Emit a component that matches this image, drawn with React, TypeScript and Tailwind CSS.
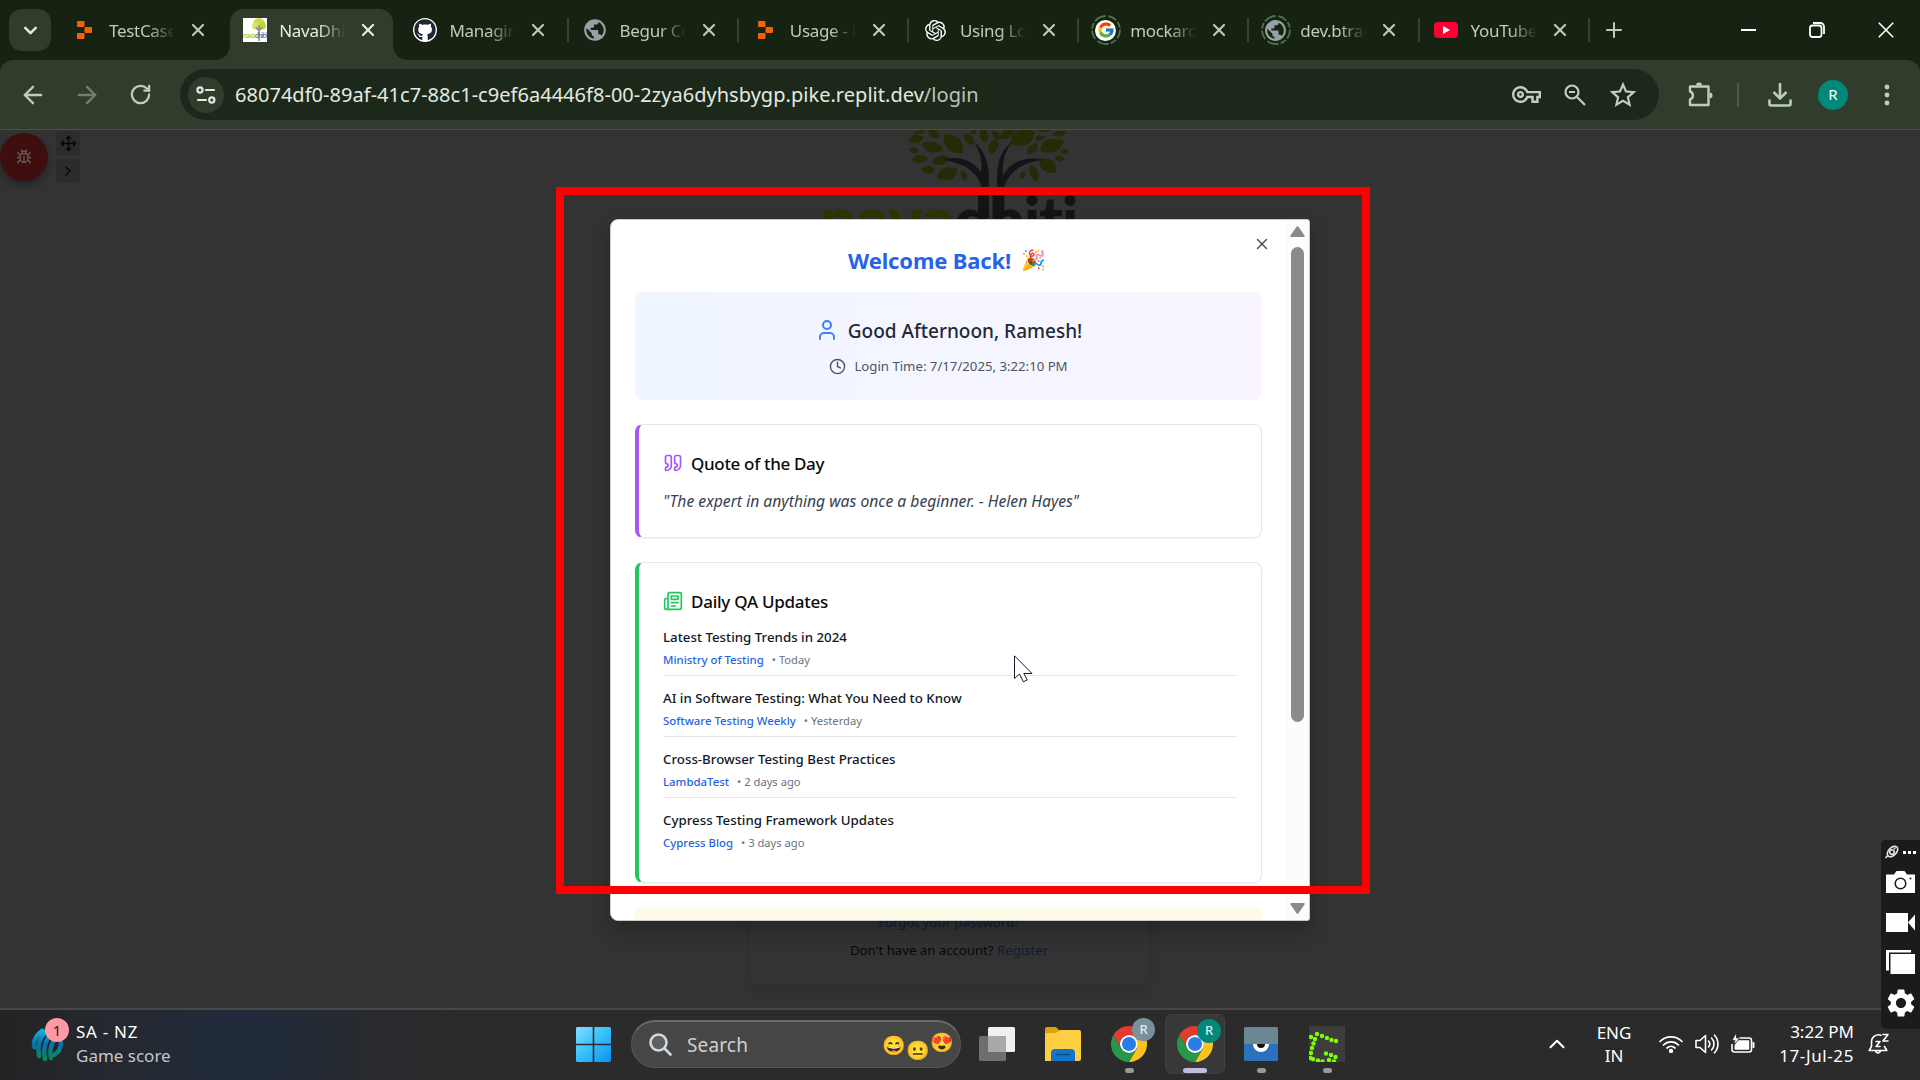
import React from 'react';
import { ArrowLeft, ArrowRight, ChevronDown, ChevronRight, ChevronUp, Clock, Move, Quote, RotateCw, User, X, Bug } from 'lucide-react';
import { FaGithub } from 'react-icons/fa';
import { FcGoogle } from 'react-icons/fc';
import { SiOpenai } from 'react-icons/si';
import { MdOutlineVpnKey, MdPublic, MdSettings, MdStarBorder } from 'react-icons/md';

const ReplitIcon = () => (
  <svg viewBox="0 0 15 18" className="h-[18px] w-[15px]" fill="#f26207">
    <rect x="0" y="0" width="7.5" height="6" rx="1" />
    <rect x="7.5" y="6" width="7.5" height="6" rx="1" />
    <rect x="0" y="12" width="7.5" height="6" rx="1" />
  </svg>
);

const NavaIcon = () => (
  <svg viewBox="0 0 24 24" className="size-6">
    <rect width="24" height="24" fill="#fff" />
    <circle cx="16" cy="6" r="6" fill="#c9db4a" />
    <circle cx="12.5" cy="8" r="3.5" fill="#d6e36c" />
    <circle cx="19.5" cy="8" r="3.5" fill="#c0d43a" />
    <path d="M16 7v16M16 13l-3-4M16 13l3-4" stroke="#8b9096" strokeWidth="1.6" fill="none" />
    <text x="0" y="20" fontSize="7" fontWeight="700" fontFamily="Lato, sans-serif" fill="#b9cf28" textLength="12">nava</text>
    <text x="12" y="20" fontSize="7" fontWeight="700" fontFamily="Lato, sans-serif" fill="#70757c" textLength="12">dhiti</text>
  </svg>
);

const GithubIcon = () => (
  <span className="flex size-6 items-center justify-center rounded-full bg-white">
    <FaGithub className="size-[22px] text-[#1f2733]" />
  </span>
);

const GlobeIcon = () => <MdPublic className="size-[26px] text-[#9aa0a8]" />;

const Ring = ({ children }: { children: React.ReactNode }) => (
  <span className="relative flex size-[30px] shrink-0 items-center justify-center">
    <svg viewBox="0 0 30 30" className="absolute inset-0" fill="none" stroke="#4c7449" strokeWidth="1.8">
      <circle cx="15" cy="15" r="14" strokeDasharray="9 2 6 2 12 3" />
    </svg>
    {children}
  </span>
);

const GoogleIcon = () => (
  <Ring>
    <span className="flex size-[21px] items-center justify-center rounded-full bg-white">
      <FcGoogle className="size-[18px]" />
    </span>
  </Ring>
);

const RingGlobe = () => (
  <Ring>
    <MdPublic className="size-[25px] text-[#9aa0a8]" />
  </Ring>
);

const YoutubeIcon = () => (
  <span className="flex h-4 w-6 items-center justify-center rounded-[4px] bg-[#ff0033]">
    <svg viewBox="0 0 7 8" className="h-2 w-[7px]" fill="#fff"><path d="M0 0l7 4-7 4z" /></svg>
  </span>
);

const tabs = [
  { title: 'TestCase', icon: <ReplitIcon /> },
  { title: 'NavaDhiti', icon: <NavaIcon />, active: true },
  { title: 'Managing', icon: <GithubIcon />, line: true },
  { title: 'Begur Co', icon: <GlobeIcon />, line: true },
  { title: 'Usage - R', icon: <ReplitIcon />, line: true },
  { title: 'Using Log', icon: <SiOpenai className="size-[21px] text-white" />, line: true },
  { title: 'mockaroo', icon: <GoogleIcon />, line: true },
  { title: 'dev.btrac', icon: <RingGlobe />, line: true },
  { title: 'YouTube', icon: <YoutubeIcon />, line: true },
];

function TabStrip() {
  return (
    <div className="flex h-[60px] bg-[#162313]">
      <button className="mt-[9px] ml-[9px] flex h-[42px] w-[42px] items-center justify-center rounded-[13px] bg-[#303d2d]">
        <ChevronDown size={21} strokeWidth={3} className="text-[#dbe8d6]" />
      </button>
      <div className="ml-[6px] flex">
        {tabs.map((t) => (
          <div key={t.title} className="relative flex h-[60px] w-[170.200px] items-center">
            {t.active && (
              <div className="absolute top-[9px] right-[4px] bottom-0 left-[3px] rounded-t-[14px] bg-[#303d2d]">
                <span className="absolute bottom-0 -left-[14px] size-[14px] bg-[radial-gradient(circle_at_0_0,transparent_13.5px,#303d2d_14px)]" />
                <span className="absolute -right-[14px] bottom-0 size-[14px] bg-[radial-gradient(circle_at_100%_0,transparent_13.5px,#303d2d_14px)]" />
              </div>
            )}
            <span className="relative ml-[12px] flex w-[31px] items-center justify-center">{t.icon}</span>
            <span
              className={
                'relative ml-[9px] w-[66px] overflow-hidden pt-px text-[17px] leading-6 tracking-[-0.300px] whitespace-nowrap [mask-image:linear-gradient(to_right,#000_60%,transparent)] ' +
                (t.active ? 'text-[#e4ede0]' : 'text-[#bccdb5]')
              }
            >
              {t.title}
            </span>
            <X size={20} strokeWidth={2.6} className={'relative ml-[13px] ' + (t.active ? 'text-[#e4ede0]' : 'text-[#bccdb5]')} />
            {t.line && <span className="absolute top-[18px] -right-px h-6 w-[2px] bg-[#344133]" />}
          </div>
        ))}
      </div>
      <svg viewBox="0 0 16 16" className="mt-[22px] ml-[17px] size-4" stroke="#bccdb5" strokeWidth="2" strokeLinecap="round">
        <path d="M8 1v14M1 8h14" />
      </svg>
      <div className="ml-auto flex items-center pr-[26px] text-white">
        <span className="h-[2px] w-[15px] bg-white" />
        <svg viewBox="0 0 16 16" className="ml-[53px] size-4" fill="none" stroke="currentColor" strokeWidth="1.8">
          <rect x="1" y="3.5" width="11.5" height="11.5" rx="2.5" />
          <path d="M4 1h7.5A3.5 3.5 0 0 1 15 4.500V12" />
        </svg>
        <svg viewBox="0 0 16 16" className="ml-[53px] size-4" stroke="currentColor" strokeWidth="1.6">
          <path d="M.8.8l14.400 14.400M15.200.8L.8 15.200" />
        </svg>
      </div>
    </div>
  );
}

function Toolbar() {
  return (
    <div className="h-[70px] bg-[#162313]">
      <div className="flex h-[70px] items-center rounded-t-[13px] border-b border-[#435341] bg-[#303d2d] text-[#bccfb4]">
        <ArrowLeft size={28} strokeWidth={2} className="ml-[19px]" />
        <ArrowRight size={28} strokeWidth={2} className="ml-[26px] text-[#73806e]" />
        <RotateCw size={23} strokeWidth={2.4} className="ml-[28px]" />
        <div className="ml-[28px] flex h-[51px] w-[1479px] items-center rounded-full bg-[#1c291a] pl-2">
          <span className="flex size-9 items-center justify-center rounded-full bg-[#303d2d]">
            <svg viewBox="0 0 20 18" className="h-[18px] w-5" fill="none" stroke="#e2e8df" strokeWidth="2.200">
              <circle cx="4" cy="4" r="2.600" />
              <path d="M10 4h8M2 14h8" strokeLinecap="round" />
              <circle cx="15.800" cy="14" r="2.600" />
            </svg>
          </span>
          <span className="ml-[11px] text-[20px] leading-6 tracking-[0.030px] text-[#e3e9e0]">
            68074df0-89af-41c7-88c1-c9ef6a4446f8-00-2zya6dyhsbygp.pike.replit.dev
            <span className="text-[#bcc4b9]">/login</span>
          </span>
          <div className="ml-auto flex items-center pr-[20px] text-[#c6ccc4]">
            <MdOutlineVpnKey className="size-[29px]" />
            <svg viewBox="0 0 22 22" className="ml-[23px] size-[22px]" fill="none" stroke="currentColor" strokeWidth="2.200">
              <circle cx="8" cy="8" r="6.500" />
              <path d="M5 8h6M13 13l8 8" />
            </svg>
            <MdStarBorder className="ml-[21px] size-8" />
          </div>
        </div>
        <svg viewBox="0 0 26 26" className="ml-[28px] size-[26px]" fill="none" stroke="currentColor" strokeWidth="2.400" strokeLinejoin="round">
          <path d="M3 4.500h18.500v18.500H3v-5.500a4.200 4.200 0 0 0 0-8z" />
          <path d="M9 3.500a3 3 0 0 1 6 0zM22.500 10.500a3 3 0 0 1 0 6z" fill="currentColor" stroke="none" />
        </svg>
        <span className="ml-[24px] h-6 w-[2px] bg-[#4c5b48]" />
        <svg viewBox="0 0 24 24" className="ml-[29px] size-6" fill="none" stroke="currentColor" strokeWidth="2.600">
          <path d="M12 0v15M5.500 9l6.500 6.500L18.500 9M1.500 16.500v4.500a1.500 1.500 0 0 0 1.500 1.500h18a1.500 1.500 0 0 0 1.500-1.500v-4.500" />
        </svg>
        <span className="ml-[26px] flex size-[30px] items-center justify-center rounded-full bg-[#00897b] text-[15px] leading-none text-white">R</span>
        <svg viewBox="0 0 6 22" className="ml-[36px] h-[22px] w-[6px]" fill="currentColor">
          <circle cx="3" cy="3" r="2.400" />
          <circle cx="3" cy="11" r="2.400" />
          <circle cx="3" cy="19" r="2.400" />
        </svg>
      </div>
    </div>
  );
}

// Each leaf: centre x, centre y, half length, half width, rotation.
const leaves = [
  [676, 420, 20, 11, -15], [720, 404, 18, 11, 40], [683, 400, 16, 5, -20], [671, 454, 13, 8, 20], [716, 444, 28, 15, 20],
  [768, 434, 36, 19, 55], [686, 480, 20, 11, -10], [738, 484, 24, 13, -20], [707, 512, 17, 11, 5], [753, 524, 28, 18, -25],
  [794, 530, 16, 7, 75], [806, 420, 20, 11, 60], [843, 410, 22, 10, 80], [866, 442, 24, 11, -75], [818, 398, 9, 6, -40],
  [873, 408, 16, 8, 60], [900, 404, 24, 12, -40], [937, 416, 34, 22, -30], [962, 450, 20, 10, -55], [980, 417, 13, 8, -5],
  [1009, 440, 32, 19, -25], [990, 396, 14, 4, 0], [1028, 404, 18, 8, -10], [1039, 457, 10, 7, -20], [1028, 478, 12, 8, 15],
  [1000, 500, 28, 17, 50], [966, 522, 25, 10, 75], [938, 528, 14, 6, -75],
];

function Logo() {
  return (
    <div className="absolute top-0 left-[820px] h-[130px] w-[270px] overflow-hidden">
      <svg viewBox="441 393 630 264" preserveAspectRatio="none" className="h-[88px] w-[257px]">
        {leaves.map(([x, y, l, w, r], i) => (
          <path
            key={i}
            fill="#252b07"
            transform={`translate(${x} ${y}) rotate(${r})`}
            d={`M${-l} 0Q${-l * 0.3} ${-w * 1.6} ${l * 0.5} ${-w * 0.8}Q${l} ${-w * 0.3} ${l} 0Q${l * 0.3} ${w * 1.6} ${-l * 0.5} ${w * 0.8}Q${-l} ${w * 0.3} ${-l} 0Z`}
          />
        ))}
        <g fill="#121416">
          <path d="M818 428Q856 466 855 540V657H836V560Q820 496 742 482Q800 462 836 520Q842 470 818 428Z" />
          <path d="M914 428Q886 460 889 530Q920 464 990 482Q916 490 893 560V657H875V530Q876 456 914 428Z" />
        </g>
      </svg>
      <div className="absolute top-[57px] left-0 flex font-[Lato] text-[64px] leading-[64px] font-black">
        <span className="w-[134px] text-[#2d3500]">nava</span>
        <span className="tracking-[-1.500px] text-[#121416]">dhiti</span>
      </div>
    </div>
  );
}

const updates = [
  ['Latest Testing Trends in 2024', 'Ministry of Testing', 'Today'],
  ['AI in Software Testing: What You Need to Know', 'Software Testing Weekly', 'Yesterday'],
  ['Cross-Browser Testing Best Practices', 'LambdaTest', '2 days ago'],
  ['Cypress Testing Framework Updates', 'Cypress Blog', '3 days ago'],
];

function Modal() {
  return (
    <div className="absolute top-[89px] left-[610px] flex h-[702px] w-[700px] overflow-hidden rounded-l-lg rounded-r-[3px] border border-[#c9c9c9] bg-white shadow-[0_10px_20px_rgba(0,0,0,0.25)]">
      <div className="flex w-[675px] flex-col gap-6 overflow-hidden pt-[26px] pr-[24px] pl-[24px]">
        <h1 className="-mb-[6px] flex h-7 shrink-0 items-center justify-center pr-[3px] text-[22px] font-bold tracking-[-0.150px] text-[#2563eb]">
          Welcome Back!<span className="ml-[10px] text-[20px] tracking-normal">🎉</span>
        </h1>
        <section className="flex h-[108px] shrink-0 flex-col items-center rounded-lg bg-linear-to-r from-[#eff6ff] to-[#faf5ff] pt-[25px]">
          <h2 className="flex h-7 items-center text-[19px] font-medium text-[#1f2937]">
            <User size={24} strokeWidth={2} className="mr-[9px] -mt-0.5 text-[#3b82f6]" />
            Good Afternoon, Ramesh!
          </h2>
          <p className="mt-[12px] flex h-5 items-center text-[13.200px] text-[#4b5563]">
            <Clock size={17} className="mr-2 -mt-0.5" />
            Login Time: 7/17/2025, 3:22:10 PM
          </p>
        </section>
        <section className="h-[114px] shrink-0 rounded-lg border border-l-4 border-[#e5e7eb] border-l-[#a855f7] pt-[25px] pl-[24px] shadow-xs">
          <h3 className="flex h-7 items-center text-[17px] font-medium tracking-[-0.330px] text-[#0a0a0a]">
            <Quote size={20} className="mr-[8px] -mt-0.5 text-[#a855f7]" />
            Quote of the Day
          </h3>
          <p className="mt-3 flex h-6 items-center text-[15.700px] text-[#374151] italic">"The expert in anything was once a beginner. - Helen Hayes"</p>
        </section>
        <section className="h-[321px] shrink-0 rounded-lg border border-l-4 border-[#e5e7eb] border-l-[#22c55e] pt-[25px] pr-[24px] pl-[24px] shadow-xs">
          <h3 className="flex h-7 items-center text-[17px] font-medium tracking-[-0.260px] text-[#0a0a0a]">
            <svg viewBox="0 0 24 24" className="mr-[8px] -mt-0.5 size-5" fill="none" stroke="#22c55e" strokeWidth="2" strokeLinecap="round" strokeLinejoin="round">
              <path d="M4 22h16a2 2 0 0 0 2-2V4a2 2 0 0 0-2-2H8a2 2 0 0 0-2 2v16a2 2 0 0 1-2 2Zm0 0a2 2 0 0 1-2-2v-9c0-1.100.9-2 2-2h2M18 14h-8M15 18h-5M10 6h8v4h-8V6Z" />
            </svg>
            Daily QA Updates
          </h3>
          <ul className="mt-[11px] flex flex-col gap-3">
            {updates.map(([title, source, when]) => (
              <li key={title} className="border-b border-[#e5e7eb] pb-[7px] last:border-0">
                <h4 className="h-5 text-[13.300px] leading-5 font-medium text-[#111827]">{title}</h4>
                <p className="mt-[5px] flex h-4 items-center text-[11.200px] leading-4 text-[#6b7280]">
                  <span className="mr-[8px] text-[11.400px] font-medium text-[#2563eb]">{source}</span>• {when}
                </p>
              </li>
            ))}
          </ul>
        </section>
        <section className="h-24 shrink-0 rounded-lg bg-[#fefce8]" />
      </div>
      <div className="flex flex-1 flex-col items-center bg-[#fcfcfc] pt-[6px] pb-[6px]">
        <svg viewBox="0 0 15 11" className="h-[11px] w-[15px]" fill="#8b8b8b" stroke="#8b8b8b" strokeWidth="2" strokeLinejoin="round"><path d="M7.500 1.200L13.700 10H1.300z" /></svg>
        <div className="mt-[10px] h-[475px] w-[13px] rounded-full bg-[#8b8b8b]" />
        <svg viewBox="0 0 15 11" className="mt-auto h-[11px] w-[15px]" fill="#8b8b8b" stroke="#8b8b8b" strokeWidth="2" strokeLinejoin="round"><path d="M7.500 9.800L13.700 1H1.300z" /></svg>
      </div>
      <X size={18} strokeWidth={1.8} className="absolute top-[15px] left-[642px] text-[#4d4d4d]" />
    </div>
  );
}

function Page() {
  return (
    <main className="relative h-[878px] overflow-hidden bg-[#333333]">
      <div className="flex gap-2">
        <span className="mt-[3px] flex size-12 items-center justify-center rounded-full bg-[#3f0f0f] text-[#6b5a5a] shadow-[0_5px_8px_rgba(0,0,0,0.300)]">
          <Bug size={16} strokeWidth={2} />
        </span>
        <div className="mt-px flex flex-col gap-1 text-[#050505]">
          <span className="flex size-6 items-center justify-center rounded bg-[#2c2c2c]"><Move size={17} /></span>
          <span className="flex size-6 items-center justify-center rounded bg-[#2c2c2c]"><ChevronRight size={16} /></span>
        </div>
      </div>
      <Logo />
      <div className="absolute top-[400px] left-[750px] flex h-[454px] w-[398px] flex-col items-center justify-end rounded-lg bg-[#333333] pb-[24px] text-[13.200px] text-[#080808] shadow-[0_6px_12px_rgba(0,0,0,0.120)]">
        <p className="h-5 leading-5 text-[#111c33]">Forgot your password?</p>
        <p className="mt-[8px] h-5 leading-5">Don't have an account? <span className="text-[#111c33]">Register</span></p>
      </div>
      <Modal />
      <div className="absolute top-[57px] left-[556px] h-[707px] w-[814px] border-8 border-[#ff0000]" />
      <svg viewBox="0 0 19 28" className="absolute top-[525px] left-[1014px] h-7 w-[19px]" fill="#fff" stroke="#1a1a2a" strokeWidth="1">
        <path d="M.5.800V23.500L5.500 19L9.300 26.800L13.200 25L9.800 18.500H18z" />
      </svg>
    </main>
  );
}

const ChromeIcon = () => (
  <svg viewBox="2 2 44 44" className="size-9">
    <path d="M4.950 13A22 22 0 0 1 43.050 13H24A11 11 0 0 0 14.470 29.500Z" fill="#e33b2e" />
    <path d="M43.050 13A22 22 0 0 1 24 46L33.530 29.500A11 11 0 0 0 24 13Z" fill="#fcc31e" />
    <path d="M24 46A22 22 0 0 1 4.950 13L14.470 29.500A11 11 0 0 0 33.530 29.500Z" fill="#279847" />
    <circle cx="24" cy="24" r="11" fill="#fff" />
    <circle cx="24" cy="24" r="8.600" fill="#2a7de9" />
  </svg>
);

const AppSlot = ({ children, mark, active }: { children: React.ReactNode; mark?: boolean; active?: boolean }) => (
  <div className={'relative flex h-[60px] w-[60px] items-center justify-center rounded-[7px] ' + (active ? 'border border-[#414141] bg-[#383838]' : '')}>
    {children}
    {mark && <span className="absolute bottom-px left-[25.500px] h-[5px] w-[9px] rounded-full bg-[#9a9a9a]" />}
    {active && <span className="absolute bottom-0 left-[17px] h-[5px] w-6 rounded-full bg-[#c2bde0]" />}
  </div>
);

const greenDots = [
  [8, 8], [13, 10], [18, 12], [22.500, 14], [27, 15], [2, 11], [6, 13], [4.500, 17.500], [3, 22], [2, 27], [1.500, 32], [4, 33], [9, 34.500], [13.500, 35.500], [17, 27.500], [22, 29], [26.500, 31], [20, 34], [25, 35.500],
];

function Taskbar() {
  return (
    <footer className="h-[72px] border-t-2 border-[#474747] bg-[#2a2a2a] bg-[linear-gradient(90deg,#222323_0,#252830_110px,#202b3b_240px,#222a37_290px,#282a2e_370px,#2b2b2b_470px)]">
      <div className="flex h-[68px] items-center">
        <div className="flex w-[576px] items-center pl-[31px]">
          <span className="relative size-[34px]">
            <svg viewBox="0 0 34 34" className="size-[34px]">
              <defs>
                <linearGradient id="ball" x1="0" y1="0" x2="0" y2="34" gradientUnits="userSpaceOnUse">
                  <stop offset="0" stopColor="#18c3ee" /><stop offset=".5" stopColor="#0b6fae" /><stop offset="1" stopColor="#0a8a4c" />
                </linearGradient>
              </defs>
              <g fill="none" stroke="url(#ball)" strokeWidth="4.500" strokeLinecap="round">
                <path d="M11 4Q1 12 3.500 20" />
                <path d="M15 4Q5 15 8 29" />
                <path d="M20 7Q11 17 14 32" />
                <path d="M26 10Q17 19 20 31" />
                <path d="M30 15Q30 24 23 28" />
              </g>
            </svg>
            <span className="absolute -top-[9px] left-[14px] flex size-6 items-center justify-center rounded-full bg-[#ff99a4] text-[15px] text-[#222]">1</span>
          </span>
          <span className="ml-[11px] flex flex-col text-[17px] leading-6">
            <span className="tracking-[0.700px] text-white">SA - NZ</span>
            <span className="text-[#c4c6c9]">Game score</span>
          </span>
        </div>
        <svg viewBox="0 0 35 35" className="size-[35px]">
          <defs>
            <linearGradient id="win" x1="0" y1="0" x2="1" y2="1"><stop offset="0" stopColor="#84dcff" /><stop offset=".45" stopColor="#3cc3fb" /><stop offset="1" stopColor="#0a92f5" /></linearGradient>
          </defs>
          <path d="M1 0h15.700v16.700H0V1zM18.300 0H34l1 1v15.700H18.300zM0 18.300h16.700V35H1l-1-1zM18.300 18.300H35V34l-1 1H18.300z" fill="url(#win)" />
        </svg>
        <div className="ml-5 flex h-12 w-[330px] items-center rounded-full border border-t-2 border-[#575757] border-t-[#6a6a6a] bg-[#464646]">
          <svg viewBox="0 0 23 23" className="ml-[17px] size-[23px]" fill="none" stroke="#d5d8dd" strokeWidth="2.600" strokeLinecap="round">
            <circle cx="9.500" cy="9.500" r="8" fill="#5c5f63" /><path d="M15.500 15.500l6 6" />
          </svg>
          <span className="ml-[15px] text-[19px] leading-6 tracking-[0.150px] text-[#cfcfcf]">Search</span>
          <span className="ml-auto flex pr-[6px] text-[19px] leading-6">
            <span>😄</span><span className="mt-[5px] -mb-[5px]">😐</span><span className="-mt-[3px]">😍</span>
          </span>
        </div>
        <div className="ml-[6px] flex gap-[6px]">
          <AppSlot>
            <svg viewBox="0 0 36 34" className="h-[34px] w-9">
              <rect x="9" y="0" width="27" height="25" rx="1.500" fill="#f0f0f0" />
              <rect x="0" y="9" width="27" height="25" rx="1.500" fill="#6e6e6e" />
              <rect x="9" y="9" width="18" height="16" fill="#a9a9a9" />
            </svg>
          </AppSlot>
          <AppSlot>
            <svg viewBox="0 0 36 34" className="h-[34px] w-9">
              <path d="M0 2a2 2 0 0 1 2-2h9l4 4v6H0z" fill="#e0a008" />
              <path d="M0 6h11l4-3h19a2 2 0 0 1 2 2v27a2 2 0 0 1-2 2H0z" fill="#fdcd42" />
              <path d="M6 34v-8a4 4 0 0 1 4-4h16a4 4 0 0 1 4 4v8z" fill="#1374ca" />
              <path d="M11 27.500h14" stroke="#0a4a8a" strokeWidth="1.500" />
            </svg>
          </AppSlot>
          <AppSlot mark>
            <ChromeIcon />
            <span className="absolute top-[4px] left-[33px] flex size-[23px] items-center justify-center rounded-full bg-[#78909c] text-[13px] font-medium text-[#e3e9ec]">R</span>
          </AppSlot>
          <AppSlot active>
            <ChromeIcon />
            <span className="absolute top-[4px] left-[31px] flex size-6 items-center justify-center rounded-full bg-[#00897b] text-[13px] font-medium text-[#d3ece9]">R</span>
          </AppSlot>
          <AppSlot mark>
            <svg viewBox="0 0 34 34" className="size-[34px]">
              <rect width="34" height="34" rx="1.500" fill="#2d70bb" />
              <path d="M0 1.500A1.500 1.500 0 0 1 1.500 0h31A1.500 1.500 0 0 1 34 1.500V17H0z" fill="#6a8793" />
              <path d="M9 17a8 8 0 0 0 16 0z" fill="#fff" />
              <path d="M13 17a4 4 0 0 0 8 0z" fill="#111" />
            </svg>
          </AppSlot>
          <AppSlot mark>
            <svg viewBox="0 0 36 36" className="size-9">
              <rect width="36" height="36" fill="#3d3d3d" />
              {greenDots.map(([x, y], i) => <circle key={i} cx={x} cy={y} r="2.200" fill="#7dff00" />)}
            </svg>
          </AppSlot>
        </div>
        <div className="ml-auto flex items-center pr-4 text-[17px] leading-6 text-white">
          <span className="flex w-10 justify-center"><ChevronUp size={26} strokeWidth={1.900} /></span>
          <span className="flex w-[74px] flex-col items-center leading-[23px]"><span>ENG</span><span>IN</span></span>
          <span className="ml-[2px] flex w-9 justify-center">
            <svg viewBox="0 0 24 18" className="h-[18px] w-6" fill="none" stroke="#fff" strokeWidth="1.700" strokeLinecap="round">
              <path d="M1 6.500a15.500 15.500 0 0 1 22 0M4.500 10a10.500 10.500 0 0 1 15 0M8 13a6 6 0 0 1 8 0" /><circle cx="12" cy="16" r="1.300" fill="#fff" />
            </svg>
          </span>
          <span className="flex w-9 justify-center">
            <svg viewBox="0 0 24 20" className="h-5 w-6" fill="none" stroke="#fff" strokeWidth="1.600" strokeLinecap="round" strokeLinejoin="round">
              <path d="M1 6.500h4L10.500 1.500v17L5 13.500H1zM13.500 7a4.500 4.500 0 0 1 0 6M16.500 4a8.500 8.500 0 0 1 0 12M19.500 1.200a13 13 0 0 1 0 17.600" />
            </svg>
          </span>
          <span className="flex w-9 justify-center">
            <svg viewBox="0 0 24 20" className="h-5 w-6 overflow-visible">
              <path d="M8 4h10a2.500 2.500 0 0 1 2.500 2.500v9A2.500 2.500 0 0 1 18 18H3.500A2.500 2.500 0 0 1 1 15.500V10" fill="none" stroke="#fff" strokeWidth="1.600" />
              <rect x="3.500" y="6.300" width="14.700" height="9.500" rx="1" fill="#fff" />
              <path d="M21.500 8h1a1 1 0 0 1 1 1v4a1 1 0 0 1-1 1h-1z" fill="#fff" />
              <path d="M5.500-1.500L1 6.500h3l-1 5L8.500 4h-3z" fill="#fff" stroke="#2a2a2a" strokeWidth=".8" />
            </svg>
          </span>
          <span className="flex w-[93px] flex-col items-end whitespace-nowrap"><span>3:22 PM</span><span className="tracking-[0.600px]">17-Jul-25</span></span>
          <span className="flex w-[50px] justify-center">
            <svg viewBox="0 0 22 22" className="size-[22px]" fill="none" stroke="#fff" strokeWidth="1.600" strokeLinejoin="round" strokeLinecap="round">
              <path d="M13 2.200A7 7 0 0 0 3.500 9v4.500L1.200 17.500h17.600L16.500 13.500M7.500 18a2.600 2.600 0 0 0 5 0" />
              <path d="M8 8.500h4L8 13.500h4M15 1.500h5L15 8h5" />
            </svg>
          </span>
        </div>
      </div>
    </footer>
  );
}

function Recorder() {
  return (
    <aside className="absolute top-[840px] right-0 flex h-[189px] w-[39px] flex-col items-center rounded-l-[5px] bg-[#1b1b1b]">
      <div className="mt-[5px] flex items-center gap-1">
        <svg viewBox="0 0 14 14" className="size-[14px]" fill="none" stroke="#e2e2e2" strokeWidth="1.600">
          <ellipse cx="7.500" cy="6.500" rx="6.300" ry="3.900" transform="rotate(-45 7.500 6.500)" />
          <circle cx="7" cy="7" r="2.300" /><path d="M9 4l1.500-1.500M3.500 10L.5 13" />
        </svg>
        <span className="flex gap-[2px]"><i className="size-[3px] bg-white" /><i className="size-[3px] bg-white" /><i className="size-[3px] bg-white" /></span>
      </div>
      <svg viewBox="0 0 29 22" className="mt-[12px] h-[22px] w-[29px]">
        <path d="M0 3.500h8L10.500 0h8L21 3.500h8V22H0z" fill="#fff" /><circle cx="14.500" cy="12.500" r="5.300" fill="none" stroke="#1b1b1b" strokeWidth="1.500" /><circle cx="24.500" cy="7.500" r="1" fill="#1b1b1b" />
      </svg>
      <svg viewBox="0 0 29 19" className="mt-5 h-[19px] w-[29px]" fill="#fff"><path d="M0 0h22v19H0zM22 9.500L29 1.500v16z" /></svg>
      <svg viewBox="0 0 29 24" className="mt-[18px] h-6 w-[29px]" fill="#fff"><path d="M0 0h25v2.500H3V20.500H0zM4.500 4H29v20H4.500z" /></svg>
      <MdSettings className="mt-[12px] size-[34px] text-white" />
    </aside>
  );
}

export default function App() {
  return (
    <div className="relative flex h-[1080px] w-[1920px] flex-col overflow-hidden bg-[#333333] font-['Noto_Sans',sans-serif]">
      <TabStrip />
      <Toolbar />
      <Page />
      <Taskbar />
      <Recorder />
    </div>
  );
}
